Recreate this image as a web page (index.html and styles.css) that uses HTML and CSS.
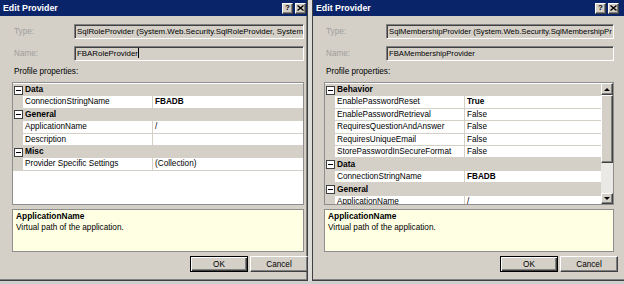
FILE: index.html
```html
<!DOCTYPE html>
<html lang="en">
<head>
  <meta charset="UTF-8">
  <title>Edit Provider</title>
  <link rel="stylesheet" href="styles.css">
</head>
<body>
  <div class="screen">

    <!-- Role provider dialog -->
    <section class="dialog dialog-left">
      <header class="titlebar">
        <span class="title">Edit Provider</span>
        <span class="tb-buttons">
          <span class="tb-btn">?</span>
          <span class="tb-btn"><svg width="7" height="6" viewBox="0 0 7 6"><path d="M0.5 0.5 L6.5 5.5 M6.5 0.5 L0.5 5.5" stroke="#000" stroke-width="1.4"/></svg></span>
        </span>
      </header>
      <div class="dialog-body">
        <div class="field"><span class="field-label">Type:</span><div class="textbox">SqlRoleProvider (System.Web.Security.SqlRoleProvider, System</div></div>
        <div class="field"><span class="field-label">Name:</span><div class="textbox">FBARoleProvider<span class="caret"></span></div></div>
        <div class="section-label">Profile properties:</div>
        <div class="propgrid">
          <div class="rows">
            <div class="row cat"><span class="toggle"></span><span>Data</span></div>
            <div class="row prop"><span></span><span class="pname">ConnectionStringName</span><span class="pval bold">FBADB</span></div>
            <div class="row cat"><span class="toggle"></span><span>General</span></div>
            <div class="row prop"><span></span><span class="pname">ApplicationName</span><span class="pval">/</span></div>
            <div class="row prop"><span></span><span class="pname">Description</span><span class="pval"></span></div>
            <div class="row cat"><span class="toggle"></span><span>Misc</span></div>
            <div class="row prop"><span></span><span class="pname">Provider Specific Settings</span><span class="pval">(Collection)</span></div>
          </div>
        </div>
        <div class="desc">
          <div class="desc-title">ApplicationName</div>
          <div>Virtual path of the application.</div>
        </div>
        <div class="buttons">
          <button class="btn default">OK</button>
          <button class="btn">Cancel</button>
        </div>
      </div>
    </section>

    <!-- Membership provider dialog -->
    <section class="dialog dialog-right">
      <header class="titlebar">
        <span class="title">Edit Provider</span>
        <span class="tb-buttons">
          <span class="tb-btn">?</span>
          <span class="tb-btn"><svg width="7" height="6" viewBox="0 0 7 6"><path d="M0.5 0.5 L6.5 5.5 M6.5 0.5 L0.5 5.5" stroke="#000" stroke-width="1.4"/></svg></span>
        </span>
      </header>
      <div class="dialog-body">
        <div class="field"><span class="field-label">Type:</span><div class="textbox">SqlMembershipProvider (System.Web.Security.SqlMembershipPr</div></div>
        <div class="field"><span class="field-label">Name:</span><div class="textbox">FBAMembershipProvider</div></div>
        <div class="section-label">Profile properties:</div>
        <div class="propgrid">
          <div class="rows">
            <div class="row cat"><span class="toggle"></span><span>Behavior</span></div>
            <div class="row prop"><span></span><span class="pname">EnablePasswordReset</span><span class="pval bold">True</span></div>
            <div class="row prop"><span></span><span class="pname">EnablePasswordRetrieval</span><span class="pval">False</span></div>
            <div class="row prop"><span></span><span class="pname">RequiresQuestionAndAnswer</span><span class="pval">False</span></div>
            <div class="row prop"><span></span><span class="pname">RequiresUniqueEmail</span><span class="pval">False</span></div>
            <div class="row prop"><span></span><span class="pname">StorePasswordInSecureFormat</span><span class="pval">False</span></div>
            <div class="row cat"><span class="toggle"></span><span>Data</span></div>
            <div class="row prop"><span></span><span class="pname">ConnectionStringName</span><span class="pval bold">FBADB</span></div>
            <div class="row cat"><span class="toggle"></span><span>General</span></div>
            <div class="row prop"><span></span><span class="pname">ApplicationName</span><span class="pval">/</span></div>
          </div>
          <div class="vscroll">
            <span class="sb-btn"><span class="arrow-up"></span></span>
            <span class="sb-thumb"></span>
            <span class="sb-track"></span>
            <span class="sb-btn"><span class="arrow-down"></span></span>
          </div>
        </div>
        <div class="desc">
          <div class="desc-title">ApplicationName</div>
          <div>Virtual path of the application.</div>
        </div>
        <div class="buttons">
          <button class="btn default">OK</button>
          <button class="btn">Cancel</button>
        </div>
      </div>
    </section>

  </div>
</body>
</html>
```

FILE: styles.css
```css
* {
  box-sizing: border-box;
}

body {
  margin: 0;
  width: 624px;
  height: 284px;
  overflow: hidden;
  background: #cfcfcf;
  font-family: "Liberation Sans", Arial, sans-serif;
  font-size: 8.2px;
  color: #000;
}

.screen {
  display: flex;
  gap: 4px;
  background: #dedcd8;
  height: 281px;
}

/* window frame */
.dialog {
  background: #d4d0c8;
  height: 281px;
  display: flex;
  flex-direction: column;
  border-bottom: 1px solid #404040;
  box-shadow: inset 0 -1px #808080;
}

.dialog-left {
  width: 308px;
  border-right: 1px solid #404040;
  box-shadow: inset -1px -1px #808080;
}

.dialog-right {
  width: 312px;
  border-left: 1px solid #404040;
}

.titlebar {
  height: 16px;
  background: #0a246a;
  display: flex;
  align-items: center;
  justify-content: space-between;
  padding: 0 1px 0 3px;
}

.dialog-right .titlebar {
  padding: 0 5px 0 3px;
}

.title {
  color: #fff;
  font-weight: bold;
  font-size: 8.8px;
}

.tb-buttons {
  display: flex;
  gap: 2px;
}

.tb-btn {
  width: 11px;
  height: 11px;
  background: #d4d0c8;
  border: 1px solid;
  border-color: #fff #404040 #404040 #fff;
  box-shadow: inset -1px -1px #808080;
  display: flex;
  align-items: center;
  justify-content: center;
  font-weight: bold;
  font-size: 8px;
  line-height: 1;
}

.dialog-body {
  flex: 1;
  display: flex;
  flex-direction: column;
  padding: 8px 3px 0 12px;
}

.dialog-right .dialog-body {
  padding: 8px 10px 0 11px;
}

/* text fields */
.field {
  display: flex;
  height: 15px;
  margin-bottom: 7px;
}

.field-label {
  width: 62px;
  padding-left: 2px;
  line-height: 15px;
  color: #a09e9a;
}

.textbox {
  flex: 1;
  min-width: 0;
  border: 1px solid;
  border-color: #808080 #fff #fff #808080;
  box-shadow: inset 1px 1px #404040;
  padding: 0 1px 0 2px;
  font-size: 7.9px;
  line-height: 13px;
  white-space: nowrap;
  overflow: hidden;
}

.dialog-right .textbox {
  font-size: 7.7px;
}

.caret {
  display: inline-block;
  width: 1px;
  height: 10px;
  background: #000;
  vertical-align: -2px;
}

.section-label {
  margin-top: -2px;
  padding-left: 2px;
  line-height: 11px;
}

/* property grid */
.propgrid {
  margin-top: 5px;
  height: 123px;
  border: 1px solid #8e8e8e;
  background: #fff;
  display: flex;
  overflow: hidden;
}

.rows {
  flex: 1;
  min-width: 0;
  padding-top: 1px;
}

.row {
  height: 12.4px;
  line-height: 11.4px;
  background: #d4d0c8;
  white-space: nowrap;
}

.row.prop {
  display: grid;
  grid-template-columns: 9px 129px 1fr;
  column-gap: 1px;
  padding-bottom: 1px;
}

.row.cat {
  display: flex;
  align-items: center;
  font-weight: bold;
  font-size: 8.4px;
}

.pname,
.pval {
  background: #fff;
  padding-left: 2px;
  overflow: hidden;
}

.bold {
  font-weight: bold;
}

.toggle {
  position: relative;
  width: 9px;
  height: 9px;
  margin: 0 2px 0 1px;
  border: 1px solid #404040;
  background: #fff;
}

.toggle::after {
  content: "";
  position: absolute;
  left: 1px;
  right: 1px;
  top: 3px;
  height: 1px;
  background: #000;
}

/* scrollbar */
.vscroll {
  width: 12px;
  display: flex;
  flex-direction: column;
  background: #ebe9e5;
}

.sb-btn,
.sb-thumb {
  background: #d4d0c8;
  border: 1px solid;
  border-color: #fff #404040 #404040 #fff;
  box-shadow: inset -1px -1px #808080;
}

.sb-btn {
  height: 12px;
  display: flex;
  align-items: center;
  justify-content: center;
}

.sb-btn:last-child {
  height: 11px;
}

.sb-thumb {
  height: 68px;
}

.sb-track {
  flex: 1;
}

.arrow-up,
.arrow-down {
  width: 0;
  height: 0;
  border-left: 3px solid transparent;
  border-right: 3px solid transparent;
}

.arrow-up {
  border-bottom: 3px solid #000;
}

.arrow-down {
  border-top: 3px solid #000;
}

/* help pane */
.desc {
  margin-top: 4px;
  height: 43px;
  border: 1px solid #8e8e8e;
  background: #ffffe4;
  padding: 0 3px;
  line-height: 12px;
}

.desc-title {
  font-weight: bold;
  font-size: 8.4px;
}

/* buttons */
.buttons {
  margin-top: 4px;
  margin-right: -4px;
  display: flex;
  justify-content: flex-end;
  gap: 2px;
}

.btn {
  width: 58px;
  height: 16px;
  padding: 0;
  font: inherit;
  color: #000;
  background: #d4d0c8;
  border: 1px solid;
  border-color: #fff #404040 #404040 #fff;
  box-shadow: inset -1px -1px #808080;
}

.btn.default {
  border-color: #000;
  box-shadow: inset 1px 1px #fff, inset -1px -1px #404040, inset -2px -2px #808080;
}
```
